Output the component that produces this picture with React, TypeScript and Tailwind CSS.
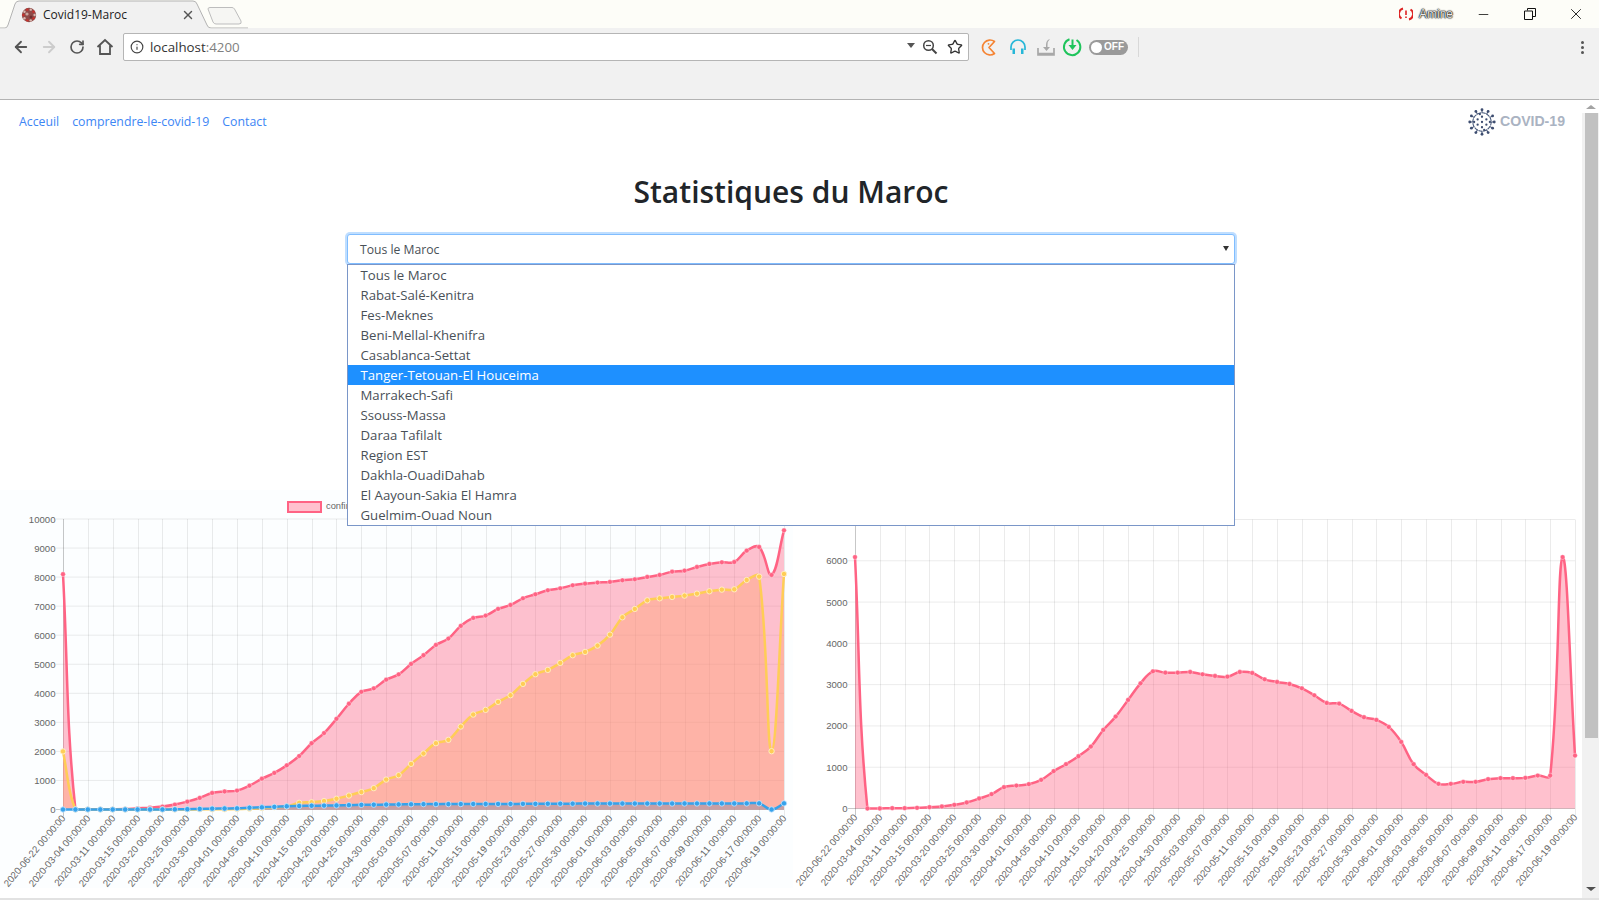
import { ArrowLeft, ArrowRight, RotateCw, Info, Star, X, Minus } from "lucide-react";

const labels = [
  "2020-06-22", "2020-03-04", "2020-03-11", "2020-03-15", "2020-03-20", "2020-03-25",
  "2020-03-30", "2020-04-01", "2020-04-05", "2020-04-10", "2020-04-15", "2020-04-20",
  "2020-04-25", "2020-04-30", "2020-05-03", "2020-05-07", "2020-05-11", "2020-05-15",
  "2020-05-19", "2020-05-23", "2020-05-27", "2020-05-30", "2020-06-01", "2020-06-03",
  "2020-06-05", "2020-06-07", "2020-06-09", "2020-06-11", "2020-06-17", "2020-06-19",
];

const regions = [
  "Tous le Maroc", "Rabat-Salé-Kenitra", "Fes-Meknes", "Beni-Mellal-Khenifra", "Casablanca-Settat",
  "Tanger-Tetouan-El Houceima", "Marrakech-Safi", "Ssouss-Massa", "Daraa Tafilalt", "Region EST",
  "Dakhla-OuadiDahab", "El Aayoun-Sakia El Hamra", "Guelmim-Ouad Noun",
];

const confirmed = [
  8100, 0, 10, 10, 10, 15, 40, 60, 100, 170, 270, 400, 570, 620, 650, 820, 1060, 1260, 1520, 1840,
  2280, 2630, 3120, 3640, 4050, 4170, 4470, 4650, 5010, 5310, 5665, 5883, 6320, 6594, 6675, 6904,
  7040, 7270, 7408, 7546, 7615, 7718, 7775, 7810, 7833, 7890, 7925, 8005, 8073, 8188, 8222, 8348,
  8452, 8510, 8520, 8910, 9036, 8073, 9610,
];
const recovered = [
  2000, 0, 0, 0, 0, 0, 0, 0, 0, 2, 3, 5, 6, 10, 15, 30, 50, 80, 110, 230, 250, 290, 370, 480, 600,
  735, 1030, 1180, 1570, 1927, 2282, 2397, 2855, 3268, 3430, 3704, 3933, 4323, 4656, 4805, 5046,
  5310, 5424, 5642, 6020, 6617, 6904, 7200, 7270, 7316, 7362, 7430, 7511, 7568, 7580, 7900, 8016,
  2007, 8108,
];
const deaths = [
  0, 0, 0, 0, 0, 0, 0, 0, 0, 5, 10, 20, 30, 35, 40, 60, 75, 90, 110, 120, 130, 135, 140, 150, 160,
  165, 170, 175, 180, 185, 185, 186, 188, 190, 190, 192, 192, 194, 195, 198, 200, 200, 205, 205,
  205, 205, 205, 205, 205, 205, 207, 207, 207, 208, 208, 210, 212, 0, 212,
];

// y pixels read off the second chart, converted to active cases below
const activeY = [
  142, 897, 897, 896, 896, 895, 893, 891, 886, 879, 867, 854, 833, 828, 824, 811, 785, 764, 740, 711,
  661, 621, 571, 521, 485, 489, 489, 487, 494, 499, 501, 487, 490, 509, 517, 523, 536, 557, 580, 582,
  604, 623, 631, 652, 697, 764, 796, 823, 823, 817, 817, 809, 806, 806, 805, 798, 798, 142, 738,
];
const active = activeY.map((y) => ((897 - y) / 124) * 1000);

type Series = { values: number[]; line: string; fill: string; point: string; ring: string; r: number };

const pink = { line: "#ff6384", fill: "rgba(255,99,132,0.4)", point: "#ff6384", ring: "rgba(255,255,255,0.35)", r: 2.4 };

function buildPaths(pts: { x: number; y: number }[], top: number, bottom: number) {
  const t = 0.4;
  const ctrl = pts.map((p, i) => {
    const prev = pts[i - 1] ?? p;
    const next = pts[i + 1] ?? p;
    const d01 = Math.hypot(p.x - prev.x, p.y - prev.y);
    const d12 = Math.hypot(next.x - p.x, next.y - p.y);
    const sum = d01 + d12 || 1;
    const fa = (t * d01) / sum;
    const fb = (t * d12) / sum;
    const clamp = (v: number) => Math.min(bottom, Math.max(top, v));
    return {
      ax: p.x - fa * (next.x - prev.x),
      ay: clamp(p.y - fa * (next.y - prev.y)),
      bx: p.x + fb * (next.x - prev.x),
      by: clamp(p.y + fb * (next.y - prev.y)),
    };
  });
  let d = `M${pts[0].x} ${pts[0].y}`;
  for (let i = 1; i < pts.length; i++) {
    d += ` C${ctrl[i - 1].bx} ${ctrl[i - 1].by} ${ctrl[i].ax} ${ctrl[i].ay} ${pts[i].x} ${pts[i].y}`;
  }
  return d;
}

function Chart({
  width, left, right, top, bottom, max, series, tinted,
}: {
  width: number; left: number; right: number; top: number; bottom: number; max: number; series: Series[]; tinted?: boolean;
}) {
  const xAt = (i: number) => left + (i * (right - left)) / 58;
  const yAt = (v: number) => bottom - (v / max) * (bottom - top);
  const ticks: number[] = [];
  for (let v = 0; v <= max; v += 1000) ticks.push(v);

  return (
    <svg width={width} height={398} className={tinted ? "block shrink-0 bg-[#fcfeff]" : "block shrink-0"}>
      {ticks.map((v) => (
        <g key={v}>
          <line
            x1={left - 7} x2={right} y1={yAt(v)} y2={yAt(v)}
            stroke={v === 0 ? "rgba(0,0,0,0.22)" : "rgba(0,0,0,0.08)"}
          />
          <text
            x={left - 7.5} y={yAt(v) + 3.5} textAnchor="end" fill="#666"
            className="font-['Liberation_Sans',sans-serif] text-[9.6px]"
          >
            {v}
          </text>
        </g>
      ))}
      {labels.map((label, i) => {
        const x = Math.round(xAt(i * 2)) + 0.5;
        return (
          <g key={i}>
            <line x1={x} x2={x} y1={top} y2={bottom + 7} stroke={i === 0 ? "rgba(0,0,0,0.22)" : "rgba(0,0,0,0.08)"} />
            <text
              transform={`translate(${x + 2.5} ${bottom + 9}) rotate(-50)`}
              textAnchor="end" fill="#666"
              className="font-['Liberation_Sans',sans-serif] text-[9.7px]"
            >
              {label} 00:00:00
            </text>
          </g>
        );
      })}
      {series.map((s) => {
        const pts = s.values.map((v, i) => ({ x: xAt(i), y: yAt(v) }));
        const d = buildPaths(pts, top, bottom);
        return <path key={s.line + "fill"} d={`${d} L${right} ${bottom} L${left} ${bottom} Z`} fill={s.fill} />;
      })}
      {series.map((s) => {
        const pts = s.values.map((v, i) => ({ x: xAt(i), y: yAt(v) }));
        return (
          <g key={s.line}>
            <path d={buildPaths(pts, top, bottom)} fill="none" stroke={s.line} strokeWidth={2.5} />
            {pts.map((p, i) => (
              <circle key={i} cx={p.x} cy={p.y} r={s.r} fill={s.point} stroke={s.ring} strokeWidth={1} />
            ))}
          </g>
        );
      })}
    </svg>
  );
}

function VirusLogo() {
  const spokes = Array.from({ length: 12 }, (_, i) => (i * Math.PI) / 6);
  const dots = [[0, -6], [5, -3], [5, 3], [0, 6], [-5, 3], [-5, -3], [0, 0], [-2.5, -9], [2.5, 9], [9, 0], [-9, 0]];
  return (
    <svg width={28} height={28} viewBox="-16 -16 32 32" className="shrink-0">
      <circle r={10.5} fill="none" stroke="#46587a" strokeWidth={1.2} strokeDasharray="4 1.5" />
      {spokes.map((a, i) => (
        <g key={i}>
          <line x1={Math.cos(a) * 10} y1={Math.sin(a) * 10} x2={Math.cos(a) * 13.5} y2={Math.sin(a) * 13.5} stroke="#3d4d70" strokeWidth={1.2} />
          <circle cx={Math.cos(a) * 14} cy={Math.sin(a) * 14} r={1.6} fill="#3d4d70" />
        </g>
      ))}
      {dots.map(([x, y], i) => (
        <circle key={i} cx={x} cy={y} r={1.3} fill="#3d4d70" />
      ))}
    </svg>
  );
}

function Favicon() {
  const spots = Array.from({ length: 10 }, (_, i) => (i * Math.PI) / 5);
  return (
    <svg width={16} height={16} viewBox="-8 -8 16 16" className="shrink-0">
      <circle r={7.2} fill="#8f4a48" />
      {spots.map((a, i) => (
        <circle key={i} cx={Math.cos(a) * 5.6} cy={Math.sin(a) * 5.6} r={1.2} fill={i % 2 ? "#c9302c" : "#d9b8b0"} />
      ))}
      <circle cx={-2} cy={-1} r={1.6} fill="#c9a8a0" />
      <circle cx={2} cy={2} r={1.5} fill="#6d2f30" />
    </svg>
  );
}

function Tab() {
  return (
    <div className="relative h-[29px] w-[248px] shrink-0">
      <svg width={248} height={29} className="absolute left-0 top-0">
        <path d="M0 28 L5 28 Q7 28 8 25 L15 4 Q16 1 19 1 L193 1 Q196 1 197 4 L207 25 Q208 28 211 28 L248 28" fill="#f1f1f1" stroke="#b3b3b3" />
        <path d="M0 29 L248 29" stroke="#f1f1f1" />
        <path d="M208 9 Q208 7.5 210 7.5 L232 7.5 Q233.5 7.5 234.5 9 L241 21 Q242 24 239 24 L216 24 Q214 24 213 22 Z" fill="#f6f6f3" stroke="#bdbdbd" />
      </svg>
      <div className="absolute left-[21px] top-[7px] flex w-[174px] items-center">
        <Favicon />
        <span className="ml-[6px] text-[12px] leading-[16px] text-[#222]">Covid19-Maroc</span>
        <X size={14} strokeWidth={2.4} className="ml-auto text-[#555]" />
      </div>
    </div>
  );
}

function TitleBar() {
  return (
    <div className="flex h-[28px] shrink-0 items-start justify-between bg-[#fdfdf8]">
      <Tab />
      <div className="relative flex items-center pt-[5px]">
        <svg width={14} height={14} viewBox="0 0 14 14" className="mr-[6px]">
          <path d="M4 1.5 A5.5 5.5 0 0 0 2.5 11.5 M10 12.5 A5.5 5.5 0 0 0 11.5 2.5" fill="none" stroke="#d22" strokeWidth={2} />
          <path d="M7 3.5 V8 M7 9.5 V11" stroke="#d22" strokeWidth={1.6} />
        </svg>
        <span className="w-[38px] font-['Liberation_Sans',sans-serif] text-[12px] leading-[16px] text-[#e8e8e8] [text-shadow:0_0_1.5px_#000,0_0_1.5px_#000,0_0_1px_#000]">
          Amine
        </span>
        <Minus size={15} strokeWidth={1.2} className="ml-[19px] text-black" />
        <svg width={12} height={12} viewBox="0 0 12 12" className="ml-[33px]">
          <path d="M3.5 2.5 V0.5 H11.5 V8.5 H9 M0.5 3 H8.5 V11.5 H0.5 Z" fill="none" stroke="#111" />
        </svg>
        <X size={18} strokeWidth={1.1} className="ml-[31px] mr-[14px] text-black" />
      </div>
    </div>
  );
}

function Toolbar() {
  return (
    <div className="flex h-[72px] shrink-0 items-start border-b border-[#b3b3b3] bg-[#f1f1f1] pt-[5px]">
      <div className="flex h-[28px] w-[123px] shrink-0 items-center pl-[12px]">
        <ArrowLeft size={18} strokeWidth={2.4} className="text-[#555]" />
        <ArrowRight size={18} strokeWidth={2.4} className="ml-[10px] text-[#ccc]" />
        <RotateCw size={16} strokeWidth={2.5} className="ml-[11px] text-[#555]" />
        <svg width={18} height={18} viewBox="0 0 18 18" className="ml-[11px]">
          <path d="M1.5 9 L9 2 L16.5 9 M4 7.5 V16 H14 V7.5" fill="none" stroke="#555" strokeWidth={1.8} />
        </svg>
      </div>
      <div className="flex h-[28px] w-[846px] shrink-0 items-center rounded-[2px] border border-[#b5b5b5] bg-white pl-[6px] pr-[5px]">
        <Info size={14} strokeWidth={2} className="text-[#444]" />
        <span className="ml-[6px] text-[13.3px] leading-[18px] text-[#333]">
          localhost<span className="text-[#808080]">:4200</span>
        </span>
        <svg width={8} height={5} viewBox="0 0 8 5" className="ml-auto mb-[4px]">
          <path d="M0 0 H8 L4 5 Z" fill="#555" />
        </svg>
        <svg width={16} height={16} viewBox="0 0 16 16" className="ml-[7px]">
          <circle cx={6.5} cy={6.5} r={4.8} fill="none" stroke="#444" strokeWidth={1.5} />
          <path d="M10 10 L14.5 14.5" stroke="#444" strokeWidth={2} />
          <path d="M4 6.5 H9" stroke="#444" strokeWidth={1.2} />
        </svg>
        <Star size={16} strokeWidth={2} className="ml-[9px] text-[#333]" />
      </div>
      <div className="flex h-[28px] items-center pl-[10px]">
        <svg width={19} height={19} viewBox="0 0 19 19">
          <path d="M15.5 3.5 A7.5 7.5 0 1 0 15.5 15.5 L10 9.5 Z" fill="none" stroke="#f58433" strokeWidth={1.7} strokeLinejoin="round" />
          <circle cx={9.5} cy={5.8} r={0.9} fill="#f58433" />
        </svg>
        <svg width={18} height={18} viewBox="0 0 18 18" className="ml-[11px]">
          <path d="M2 12 V9 A7 7 0 0 1 16 9 V12" fill="none" stroke="#27b7d8" strokeWidth={1.7} />
          <path d="M3.5 10.5 H6 V16 H3.5 Z M12 10.5 H14.5 V16 H12 Z" fill="#27b7d8" />
        </svg>
        <svg width={18} height={18} viewBox="0 0 18 18" className="ml-[10px]">
          <path d="M1 10 V17 H17 V10 M1 15.5 H17" fill="none" stroke="#a8a8a8" strokeWidth={1.7} />
          <path d="M13 1 Q9 2 9 7 V9 H6 L9.5 13 L13 9 H10.5 V7 Q10.5 3 13 1 Z" fill="#a8a8a8" />
        </svg>
        <svg width={20} height={20} viewBox="0 0 20 20" className="ml-[7px]">
          <path d="M7.5 2.2 A8.2 8.2 0 1 0 14.5 3" fill="none" stroke="#1fc45c" strokeWidth={2} />
          <path d="M10.5 2.5 V8.5" stroke="#1fc45c" strokeWidth={2} />
          <path d="M6.5 8 H14.5 L10.5 13 Z" fill="#1fc45c" />
        </svg>
        <div className="ml-[7px] flex h-[15px] w-[39px] items-center rounded-full bg-[#9a9a9a] pl-[2px]">
          <span className="size-[11px] rounded-full bg-white" />
          <span className="ml-[2px] font-['Liberation_Sans',sans-serif] text-[10px] font-bold leading-none text-white">OFF</span>
        </div>
        <span className="ml-[10px] h-[20px] w-px bg-[#d8d8d8]" />
      </div>
      <div className="ml-auto flex h-[28px] flex-col items-center justify-center gap-[2px] pr-[15px]">
        <span className="size-[3px] rounded-full bg-[#555]" />
        <span className="size-[3px] rounded-full bg-[#555]" />
        <span className="size-[3px] rounded-full bg-[#555]" />
      </div>
    </div>
  );
}

function Scrollbar() {
  return (
    <div className="flex w-[17px] shrink-0 flex-col items-center bg-[#f1f1f1]">
      <div className="flex h-[13px] w-full items-center justify-center bg-white">
        <span className="h-0 w-0 border-x-[5px] border-b-[4px] border-x-transparent border-b-[#a3a3a3]" />
      </div>
      <div className="ml-[1px] h-[625px] w-[13px] bg-[#c1c1c1]" />
      <div className="mt-auto flex h-[19px] w-full items-center justify-center">
        <span className="h-0 w-0 border-x-[5px] border-t-[4px] border-x-transparent border-t-[#505050]" />
      </div>
    </div>
  );
}

export default function App() {
  return (
    <div className="flex h-[900px] flex-col overflow-hidden bg-white font-['Open_Sans',sans-serif]">
      <TitleBar />
      <Toolbar />
      <div className="flex h-[798px] shrink-0">
        <main className="w-[1582px] shrink-0">
          <nav className="flex h-[43px] items-center justify-between pl-[19px] pr-[17px]">
            <div className="flex gap-[13px] text-[12.3px] leading-[18px] text-[#3d86f5]">
              <a>Acceuil</a>
              <a>comprendre-le-covid-19</a>
              <a>Contact</a>
            </div>
            <div className="flex items-center gap-[4px]">
              <VirusLogo />
              <span className="font-['Liberation_Sans',sans-serif] text-[14.1px] font-bold text-[#aab3c2]">COVID-19</span>
            </div>
          </nav>
          <h1 className="mt-[27px] text-center text-[30px] font-semibold leading-[44px] text-[#212529]">
            Statistiques du Maroc
          </h1>
          <div className="relative z-10 mx-auto mt-[20px] w-[888px]">
            <div className="flex h-[30px] items-center justify-between rounded-[3px] border border-[#80bdff] bg-white pl-[12px] pr-[5px] pt-[3px] text-[12.2px] text-[#495057] shadow-[0_0_0_2px_rgba(0,123,255,0.25)]">
              <span>Tous le Maroc</span>
              <span className="mb-[5px] h-0 w-0 border-x-[3px] border-t-[5px] border-x-transparent border-t-[#333]" />
            </div>
            <ul className="absolute left-0 right-0 top-[30px] border border-[#7a96c8] bg-white text-[13.2px] text-[#495057]">
              {regions.map((region, i) => (
                <li
                  key={region}
                  className={
                    i === 5
                      ? "h-[20px] bg-[#1e90ff] pl-[12.5px] leading-[20px] text-white"
                      : "h-[20px] pl-[12.5px] leading-[20px]"
                  }
                >
                  {region}
                </li>
              ))}
            </ul>
          </div>
          <div className="relative mt-[226px] flex">
            <Chart
              width={793} left={63} right={784} top={29} bottom={319.5} max={10000} tinted
              series={[
                { values: confirmed, ...pink },
                { values: recovered, line: "#ffcd56", fill: "rgba(255,159,110,0.4)", point: "#ffcd56", ring: "rgba(255,240,200,0.9)", r: 2.7 },
                { values: deaths, line: "#36a2eb", fill: "rgba(120,130,160,0.4)", point: "#36a2eb", ring: "rgba(200,230,255,0.8)", r: 2.7 },
              ]}
            />
            <Chart
              width={789} left={62} right={782} top={29.5} bottom={318.5} max={7000}
              series={[{ values: active, ...pink }]}
            />
            <div className="absolute left-[287px] top-[10px] flex items-center gap-[4px]">
              <span className="h-[12px] w-[35px] border-[2px] border-[#ff6384] bg-[#ffc1ce]" />
              <span className="font-['Liberation_Sans',sans-serif] text-[9.3px] text-[#666]">confirmés</span>
            </div>
          </div>
        </main>
        <Scrollbar />
      </div>
      <div className="h-[2px] shrink-0 bg-[#e2e2e2]" />
    </div>
  );
}
